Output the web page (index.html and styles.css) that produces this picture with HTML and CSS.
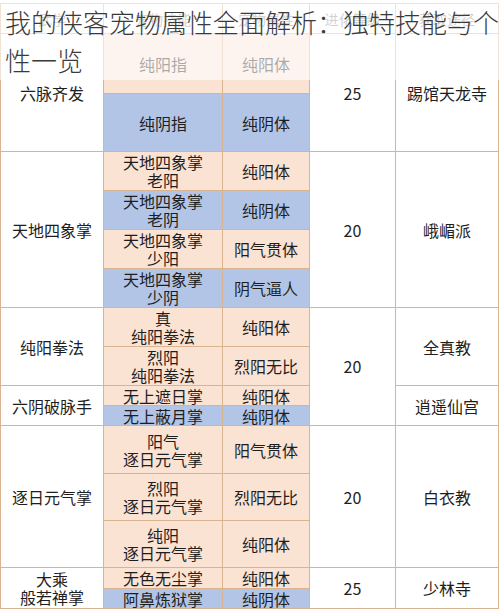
FILE: index.html
```html
<!DOCTYPE html>
<html lang="zh-CN">
<head>
<meta charset="utf-8">
<title>我的侠客宠物属性全面解析</title>
<link rel="stylesheet" href="styles.css">
</head>
<body>
<div class="page">
  <div class="table">
    <div class="cell head">武学</div>
    <div class="cell head">宠物技能</div>
    <div class="cell head">宠物属性</div>
    <div class="cell head">进化等级</div>
    <div class="cell head">获取途径</div>

    <div class="cell s2">六脉齐发</div>
    <div class="cell p">纯阳指</div>
    <div class="cell p">纯阳体</div>
    <div class="cell s2">25</div>
    <div class="cell s2">踢馆天龙寺</div>
    <div class="cell b">纯阴指</div>
    <div class="cell b">纯阴体</div>

    <div class="cell s4">天地四象掌</div>
    <div class="cell p">天地四象掌<br>老阳</div>
    <div class="cell p">纯阳体</div>
    <div class="cell s4">20</div>
    <div class="cell s4">峨嵋派</div>
    <div class="cell b">天地四象掌<br>老阴</div>
    <div class="cell b">纯阴体</div>
    <div class="cell p">天地四象掌<br>少阳</div>
    <div class="cell p">阳气贯体</div>
    <div class="cell b">天地四象掌<br>少阴</div>
    <div class="cell b">阴气逼人</div>

    <div class="cell s2">纯阳拳法</div>
    <div class="cell p">真<br>纯阳拳法</div>
    <div class="cell p">纯阳体</div>
    <div class="cell s4 num-low">20</div>
    <div class="cell s2">全真教</div>
    <div class="cell p">烈阳<br>纯阳拳法</div>
    <div class="cell p">烈阳无比</div>

    <div class="cell s2">六阴破脉手</div>
    <div class="cell p">无上遮日掌</div>
    <div class="cell p">纯阳体</div>
    <div class="cell s2">逍遥仙宫</div>
    <div class="cell b">无上蔽月掌</div>
    <div class="cell b">纯阴体</div>

    <div class="cell s3">逐日元气掌</div>
    <div class="cell p">阳气<br>逐日元气掌</div>
    <div class="cell p">阳气贯体</div>
    <div class="cell s3">20</div>
    <div class="cell s3">白衣教</div>
    <div class="cell p">烈阳<br>逐日元气掌</div>
    <div class="cell p">烈阳无比</div>
    <div class="cell p">纯阳<br>逐日元气掌</div>
    <div class="cell p">纯阳体</div>

    <div class="cell s2">大乘<br>般若禅掌</div>
    <div class="cell p">无色无尘掌</div>
    <div class="cell p">纯阳体</div>
    <div class="cell s2">25</div>
    <div class="cell s2">少林寺</div>
    <div class="cell b">阿鼻炼狱掌</div>
    <div class="cell b">纯阴体</div>
  </div>

  <div class="veil">
    <h1 class="title">我的侠客宠物属性全面解析：独特技能与个性一览</h1>
  </div>
</div>
</body>
</html>
```

FILE: styles.css
```css
html, body {
  margin: 0;
  padding: 0;
  background: #ffffff;
}

body {
  font-family: "Noto Sans CJK SC", "Noto Sans", sans-serif;
  color: #1e1e1e;
}

.page {
  position: relative;
  width: 500px;
  height: 611px;
  overflow: hidden;
}

.table {
  margin-top: 3px;
  width: 499px;
  display: grid;
  grid-template-columns: 102px 118px 86px 85px 102px;
  grid-template-rows: 29px 59px 57px 38px 38px 38px 38px 38px 38px 19px 19px 47px 46px 46px 20px 19px;
  gap: 1px;
  padding: 1px;
  box-sizing: border-box;
  background: #d8b590;
}

.cell {
  background: #ffffff;
  display: flex;
  align-items: center;
  justify-content: center;
  text-align: center;
  font-size: 16px;
  line-height: 18px;
  white-space: nowrap;
}

.head {
  color: #8a8a8a;
  font-size: 14px;
}

.p { background: #fbe3d4; }
.b { background: #b2c5e6; }

.s2 { grid-row: span 2; }
.s3 { grid-row: span 3; }
.s4 { grid-row: span 4; }

.num-low {
  align-items: flex-start;
  padding-top: 49px;
}

.veil {
  position: absolute;
  left: 0;
  top: 0;
  width: 500px;
  height: 80px;
  background: rgba(255, 255, 255, 0.62);
}

.title {
  margin: 0;
  padding: 3px 0 0 5px;
  width: 495px;
  font-size: 26px;
  line-height: 38px;
  font-weight: 300;
  color: #3a3a3a;
  letter-spacing: 0;
}
```
